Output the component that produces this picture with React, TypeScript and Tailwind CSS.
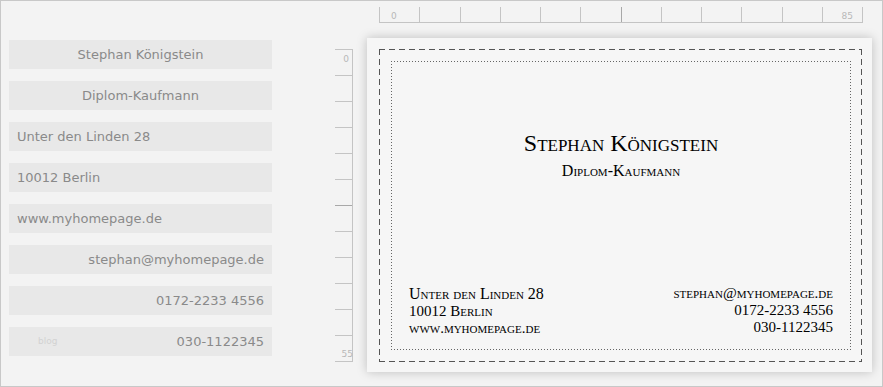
import React from 'react';

const fields = [
  { value: 'Stephan Königstein', align: 'justify-center' },
  { value: 'Diplom-Kaufmann', align: 'justify-center' },
  { value: 'Unter den Linden 28', align: 'justify-start' },
  { value: '10012 Berlin', align: 'justify-start' },
  { value: 'www.myhomepage.de', align: 'justify-start' },
  { value: 'stephan@myhomepage.de', align: 'justify-end' },
  { value: '0172-2233 4556', align: 'justify-end' },
  { value: '030-1122345', align: 'justify-between', label: 'blog' },
];

const ticks = Array.from({ length: 12 }, (_, i) => i);

export default function App() {
  return (
    <div className="w-[883px] h-[387px] border border-[#c8c8c8] bg-[#f3f3f3] flex font-['DejaVu_Sans',sans-serif] overflow-hidden">
      {/* Form fields */}
      <div className="pl-[8px] pt-[39px] flex flex-col gap-[12px]">
        {fields.map((f) => (
          <div
            key={f.value}
            className={`w-[263px] h-[29px] bg-[#e8e8e8] flex items-center px-[8px] text-[13px] text-[#8a8a8a] ${f.align}`}
          >
            {f.label && <span className="pl-[21px] text-[9px] text-[#d2d2d2]">{f.label}</span>}
            <span>{f.value}</span>
          </div>
        ))}
      </div>

      {/* Card canvas with rulers */}
      <div className="ml-[63px] pt-[6px] flex flex-col">
        {/* Top ruler */}
        <div className="ml-[44px] w-[484px] h-[16px] grid grid-cols-12 border-r border-b border-[#c4c4c4]">
          {ticks.map((i) => (
            <div
              key={i}
              className={`border-l ${i === 6 ? 'border-[#a8a8a8]' : 'border-[#c4c4c4]'} flex items-end pb-[1px] text-[9px] leading-none text-[#b8b8b8] ${i === 11 ? 'justify-end pr-[9px]' : 'pl-[11px]'}`}
            >
              {i === 0 && '0'}
              {i === 11 && '85'}
            </div>
          ))}
        </div>

        <div className="mt-[15px] flex">
          {/* Left ruler */}
          <div className="mt-[11px] w-[18px] h-[313px] grid grid-rows-12 border-r border-b border-[#c4c4c4]">
            {ticks.map((i) => (
              <div
                key={i}
                className={`border-t ${i === 6 ? 'border-[#a8a8a8]' : 'border-[#c4c4c4]'} flex justify-end text-[9px] leading-none text-[#b8b8b8] ${i === 11 ? 'items-end pb-[2px] -mr-[1px]' : 'items-start pt-[5px] pr-[3px]'}`}
              >
                {i === 0 && '0'}
                {i === 11 && '55'}
              </div>
            ))}
          </div>

          {/* Business card */}
          <div className="ml-[14px] w-[505px] h-[334px] bg-[#f6f6f6] shadow-[0_0_10px_rgba(0,0,0,0.22)] pt-[11px] pl-[12px] pr-[10px] pb-[10px]">
            {/* cut line */}
            <div className="h-full p-[12px] pr-[11px] [background:linear-gradient(90deg,#555_60%,transparent_0)_top_left/10px_1px_repeat-x,linear-gradient(90deg,#555_60%,transparent_0)_bottom_left/10px_1px_repeat-x,linear-gradient(#555_60%,transparent_0)_top_left/1px_10px_repeat-y,linear-gradient(#555_60%,transparent_0)_top_right/1px_10px_repeat-y]">
              {/* safe area */}
              <div className="h-full p-[1px] [background:linear-gradient(90deg,#666_33%,transparent_0)_top_left/3px_1px_repeat-x,linear-gradient(90deg,#666_33%,transparent_0)_bottom_left/3px_1px_repeat-x,linear-gradient(#666_33%,transparent_0)_top_left/1px_3px_repeat-y,linear-gradient(#666_33%,transparent_0)_top_right/1px_3px_repeat-y]">
                <div className="h-full flex flex-col justify-between pt-[67px] pb-[12px] px-[17px] font-['Liberation_Serif',serif] text-black [font-variant:small-caps]">
                  <div className="flex flex-col items-center">
                    <div className="text-[24px] leading-[28px]">Stephan Königstein</div>
                    <div className="mt-[4px] text-[16px] leading-[20px]">Diplom-Kaufmann</div>
                  </div>
                  <div className="flex justify-between items-end">
                    <div className="flex flex-col">
                      <div className="text-[16px] leading-[18px]">Unter den Linden 28</div>
                      <div className="text-[15px] leading-[17px]">10012 Berlin</div>
                      <div className="text-[15px] leading-[17px]">www.myhomepage.de</div>
                    </div>
                    <div className="flex flex-col items-end pb-[2px]">
                      <div className="text-[15px] leading-[17px]">stephan@myhomepage.de</div>
                      <div className="text-[15px] leading-[17px]">0172-2233 4556</div>
                      <div className="text-[15px] leading-[16px]">030-1122345</div>
                    </div>
                  </div>
                </div>
              </div>
            </div>
          </div>
        </div>
      </div>
    </div>
  );
}
